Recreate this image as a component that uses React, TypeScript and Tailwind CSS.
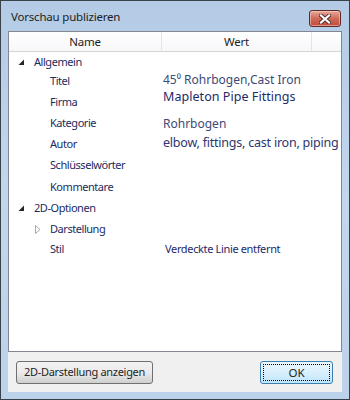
import React from "react";

const font = { fontFamily: '"Noto Sans", "Open Sans", sans-serif' };

function Expanded() {
  return (
    <svg width="7" height="7" viewBox="0 0 7 7" className="shrink-0">
      <polygon points="6,0.5 6,6 0.5,6" fill="#262626" />
    </svg>
  );
}

function Collapsed() {
  return (
    <svg width="6" height="9" viewBox="0 0 6 9" className="shrink-0">
      <polygon points="0.5,0.5 5,4.5 0.5,8.5" fill="#ffffff" stroke="#a6a6a6" strokeWidth="1" />
    </svg>
  );
}

type Row = {
  name: string;
  value?: string;
  level: 0 | 1;
  h: number;
  icon?: "exp" | "col";
  vClass?: string;
};

const rows: Row[] = [
  { name: "Allgemein", level: 0, h: 20, icon: "exp" },
  { name: "Titel", level: 1, h: 19, value: "45⁰ Rohrbogen,Cast Iron", vClass: "text-[12px] text-[#3b4a78] pb-[4px]" },
  { name: "Firma", level: 1, h: 22, value: "Mapleton Pipe Fittings", vClass: "text-[12.5px] tracking-[0.05px] text-[#1d2a6a] pb-[9px]" },
  { name: "Kategorie", level: 1, h: 21, value: "Rohrbogen", vClass: "text-[12px] text-[#3b4a78]" },
  { name: "Autor", level: 1, h: 21, value: "elbow, fittings, cast iron, piping", vClass: "text-[12.5px] tracking-[-0.22px] text-[#2c3670] pb-[2px]" },
  { name: "Schlüsselwörter", level: 1, h: 21 },
  { name: "Kommentare", level: 1, h: 22 },
  { name: "2D-Optionen", level: 0, h: 21, icon: "exp" },
  { name: "Darstellung", level: 1, h: 20, icon: "col" },
  { name: "Stil", level: 1, h: 20, value: "Verdeckte Linie entfernt", vClass: "text-[11px] tracking-[-0.35px] text-[#1d2a6a] pl-[2px]" },
];

export default function App() {
  return (
    <div
      style={font}
      className="w-[350px] h-[400px] border border-[#3a4148] bg-gradient-to-b from-[#b4cbe6] via-[#c2d7ee] to-[#bcd2ea] flex flex-col overflow-hidden"
    >
      {/* Title bar */}
      <div className="h-[30px] shrink-0 flex items-start">
        <div className="pl-[10px] pt-[7px] text-[11.5px] tracking-[-0.2px] text-[#1e1e1e] leading-[18px]">Vorschau publizieren</div>
        <div className="ml-auto mr-[8px] mt-[9px] w-[32px] h-[17px] rounded-[3px] border border-[#5e2a24] bg-gradient-to-b from-[#e5a99a] via-[#cf6a5a] to-[#c04a3a] flex items-center justify-center shadow-[inset_0_0_0_1px_rgba(255,220,210,0.5)]">
          <svg width="12" height="10" viewBox="0 0 12 10">
            <path d="M2 1.5 L10 8.5 M10 1.5 L2 8.5" stroke="#5a2a24" strokeWidth="4" strokeLinecap="square" />
            <path d="M2 1.5 L10 8.5 M10 1.5 L2 8.5" stroke="#ffffff" strokeWidth="2.2" strokeLinecap="square" />
          </svg>
        </div>
      </div>

      {/* Client area */}
      <div className="flex-1 mx-[7px] mb-[7px] bg-[#f0f0f0] flex flex-col">
        {/* List */}
        <div className="h-[321px] border border-[#828790] bg-white flex flex-col overflow-hidden">
          {/* Header */}
          <div className="h-[20px] shrink-0 flex border-b border-[#d5d5d5] bg-gradient-to-b from-white to-[#f6f7f9] text-[11.5px] tracking-[-0.2px] text-[#1e1e1e]">
            <div className="w-[153px] flex items-center justify-center border-r border-[#e3e5e8]">Name</div>
            <div className="w-[150px] flex items-center justify-center border-r border-[#e3e5e8]">Wert</div>
            <div className="flex-1" />
          </div>
          {/* Rows */}
          <div className="flex flex-col">
            {rows.map((r) => (
              <div key={r.name} style={{ height: r.h }} className="flex items-center">
                <div className="w-[154px] shrink-0 flex items-center">
                  {r.level === 0 ? (
                    <div className="pl-[9px] flex items-center">
                      <div className="w-[7px] flex justify-center">{r.icon === "exp" ? <Expanded /> : null}</div>
                      <span className="pl-[9px] text-[11px] tracking-[-0.45px] text-[#1c2b5e]">{r.name}</span>
                    </div>
                  ) : (
                    <div className="pl-[26px] flex items-center">
                      <div className="w-[6px] flex justify-center">{r.icon === "col" ? <Collapsed /> : null}</div>
                      <span className="pl-[9px] text-[11px] tracking-[-0.45px] text-[#1c2b5e]">{r.name}</span>
                    </div>
                  )}
                </div>
                {r.value ? <div className={`whitespace-nowrap ${r.vClass}`}>{r.value}</div> : null}
              </div>
            ))}
          </div>
        </div>
        {/* Buttons */}
        <div className="flex-1 flex items-center justify-between px-[8px] pt-[1px]">
          <button className="h-[23px] w-[137px] rounded-[3px] border border-[#707070] bg-gradient-to-b from-[#f2f2f2] via-[#ebebeb] to-[#cfcfcf] text-[11px] tracking-[-0.3px] whitespace-nowrap text-[#1e1e1e] flex items-center justify-center">
            2D-Darstellung anzeigen
          </button>
          <button className="h-[23px] w-[73px] mr-[1px] rounded-[3px] border border-[#3c7fb1] bg-gradient-to-b from-[#eaf6fd] via-[#d9f0fc] to-[#bee6fd] text-[11.5px] text-[#1e1e1e] flex items-center justify-center p-[2px]">
            <span className="w-full h-full border border-dotted border-black flex items-center justify-center">OK</span>
          </button>
        </div>
      </div>
    </div>
  );
}
